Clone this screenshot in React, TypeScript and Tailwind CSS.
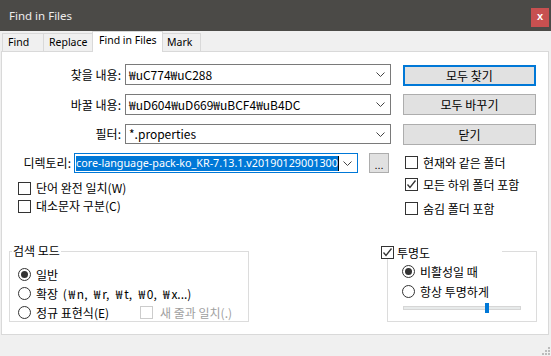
import React from 'react';

const ko = "font-['Noto_Sans_CJK_KR',sans-serif]";
const ui = "font-['Noto_Sans','Noto_Sans_CJK_KR',sans-serif]";

// the won sign is drawn wide in the original font
function Won({ text }: { text: string }) {
  const parts = text.split('₩');
  return (
    <>
      {parts.map((p, i) => (
        <React.Fragment key={i}>
          {i > 0 && <span className="inline-block w-[10px] text-center">₩</span>}
          {p}
        </React.Fragment>
      ))}
    </>
  );
}

function Chevron() {
  return (
    <svg width="9" height="5" viewBox="0 0 9 5" className="shrink-0">
      <path d="M0.5 0.5 L4.5 4.5 L8.5 0.5" fill="none" stroke="#444" strokeWidth="1" />
    </svg>
  );
}

function Check({ checked = false, disabled = false }: { checked?: boolean; disabled?: boolean }) {
  return (
    <span
      className={
        'w-[13px] h-[13px] border bg-white shrink-0 flex items-center justify-center ' +
        (disabled ? 'border-[#cccccc]' : 'border-[#333333]')
      }
    >
      {checked && (
        <svg width="11" height="11" viewBox="0 0 11 11">
          <path d="M1.5 5.5 L4 8.5 L9.5 1.5" fill="none" stroke="#333" strokeWidth="1.3" />
        </svg>
      )}
    </span>
  );
}

function Radio({ on = false }: { on?: boolean }) {
  return (
    <span className="w-[13px] h-[13px] rounded-full border border-[#333333] bg-white shrink-0 flex items-center justify-center">
      {on && <span className="w-[7px] h-[7px] rounded-full bg-[#333333]" />}
    </span>
  );
}

function Combo({ value, h = 'h-[21px]' }: { value: string; h?: string }) {
  return (
    <div className={`ml-[4px] w-[266px] ${h} border border-[#7a7a7a] bg-white flex items-center pl-[3px] pr-[5px] justify-between`}>
      <span className={`${ko} text-[12px] text-black leading-none whitespace-nowrap`}>{value}</span>
      <Chevron />
    </div>
  );
}

function Btn({ label, primary = false }: { label: string; primary?: boolean }) {
  return (
    <div
      className={
        `ml-[12px] w-[133px] h-[21px] bg-[#e1e1e1] flex items-center justify-center ${ko} text-[12px] text-black ` +
        (primary ? 'border-2 border-[#0078d7]' : 'border border-[#adadad]')
      }
    >
      {label}
    </div>
  );
}

function Row({ children, className = '' }: { children: React.ReactNode; className?: string }) {
  return <div className={`flex items-center gap-[5px] ${className}`}>{children}</div>;
}

export default function App() {
  return (
    <div className="w-[551px] h-[356px] bg-[#f0f0f0] flex flex-col overflow-hidden relative">
      {/* Title bar */}
      <div className="h-[31px] shrink-0 bg-[#4b4a47] flex justify-between pl-[9px] pr-[2px]">
        <span className={`${ui} text-[#ededed] text-[11.5px] leading-[31px]`}>Find in Files</span>
        <div className="mt-[8px] w-[18px] h-[19px] bg-[#c75050] flex items-center justify-center text-white text-[11px] font-bold font-['Liberation_Sans',sans-serif] leading-none pb-[2px]">
          x
        </div>
      </div>

      {/* Tabs */}
      <div className={`h-[20px] shrink-0 flex items-end pl-[2px] relative z-10 ${ui} text-[10.5px] text-black`}>
        <div className="w-[42px] h-[18px] bg-[#f0f0f0] border border-b-0 border-[#d9d9d9] pl-[5px] leading-[17px]">Find</div>
        <div className="-ml-px w-[50px] h-[18px] bg-[#f0f0f0] border border-b-0 border-[#d9d9d9] pl-[5px] leading-[17px]">Replace</div>
        <div className="-ml-px w-[71px] h-[21px] -mb-px bg-white border border-b-0 border-[#d9d9d9] pl-[6px] leading-[17px]">Find in Files</div>
        <div className="-ml-px w-[39px] h-[18px] bg-[#f0f0f0] border border-b-0 border-[#d9d9d9] pl-[4px] leading-[17px]">Mark</div>
      </div>

      {/* Panel */}
      <div className="ml-[1px] w-[548px] h-[284px] shrink-0 border border-[#d9d9d9] bg-white pt-[12px]">
        <div className="flex items-start">
          <div className={`w-[119px] text-right ${ko} text-[12px] leading-[21px]`}>찾을 내용:</div>
          <Combo value="₩uC774₩uC288" />
          <div className="mt-[1px]">
            <Btn label="모두 찾기" primary />
          </div>
        </div>
        <div className="flex items-start mt-[8px]">
          <div className={`w-[119px] text-right ${ko} text-[12px] leading-[21px]`}>바꿀 내용:</div>
          <Combo value="₩uD604₩uD669₩uBCF4₩uB4DC" />
          <Btn label="모두 바꾸기" />
        </div>
        <div className="flex items-start mt-[9px]">
          <div className={`w-[119px] text-right ${ko} text-[12px] leading-[20px]`}>필터:</div>
          <Combo value="*.properties" h="h-[20px]" />
          <Btn label="닫기" />
        </div>

        {/* Directory + options */}
        <div className="flex mt-[8px]">
          <div className="w-[403px]">
            <div className="flex items-center h-[20px]">
              <div className={`w-[69px] text-right ${ko} text-[12px]`}>디렉토리:</div>
              <div className="ml-[3px] w-[284px] h-[20px] border border-[#0078d7] bg-white flex items-center pl-[1px] pr-[5px] justify-between overflow-hidden">
                <span className="flex items-center">
                  <span className={`bg-[#0078d7] text-white ${ui} text-[10.75px] leading-[15px] whitespace-nowrap`}>
                    core-language-pack-ko_KR-7.13.1.v20190129001300
                  </span>
                  <span className="w-px h-[15px] bg-black" />
                </span>
                <Chevron />
              </div>
              <div className="ml-[11px] w-[20px] h-[20px] bg-[#e1e1e1] border border-[#adadad] flex items-end justify-center text-[11px] leading-[14px] font-['Liberation_Sans',sans-serif]">
                ...
              </div>
            </div>
            <div className={`mt-[6px] pl-[16px] ${ko} text-[12px]`}>
              <Row className="h-[18px]">
                <Check />
                <span>단어 완전 일치(W)</span>
              </Row>
              <Row className="h-[18px]">
                <Check />
                <span>대소문자 구분(C)</span>
              </Row>
            </div>
          </div>
          <div className={`pt-[3px] ${ko} text-[12px]`}>
            <Row className="h-[13px]">
              <Check />
              <span>현재와 같은 폴더</span>
            </Row>
            <Row className="h-[13px] mt-[9px]">
              <Check checked />
              <span>모든 하위 폴더 포함</span>
            </Row>
            <Row className="h-[13px] mt-[11px]">
              <Check />
              <span>숨김 폴더 포함</span>
            </Row>
          </div>
        </div>

        {/* Groups */}
        <div className={`flex mt-[36px] ${ko} text-[12px]`}>
          <div className="relative ml-[7px] w-[240px] h-[71px] border border-[#dcdcdc] pl-[8px] pt-[16px]">
            <span className="absolute left-[2px] -top-[9px] bg-white px-[1px] leading-[16px]">검색 모드</span>
            <Row className="h-[13px]">
              <Radio on />
              <span>일반</span>
            </Row>
            <Row className="h-[13px] mt-[6px]">
              <Radio />
              <span className="whitespace-nowrap [word-spacing:2px]">
                <Won text="확장 (₩n, ₩r, ₩t, ₩0, ₩x...)" />
              </span>
            </Row>
            <div className="flex items-center h-[13px] mt-[6px]">
              <Row className="w-[122px]">
                <Radio />
                <span>정규 표현식(E)</span>
              </Row>
              <Row className="gap-[7px]">
                <Check disabled />
                <span className="text-[#a0a0a0]">새 줄과 일치(.)</span>
              </Row>
            </div>
          </div>

          <div className="relative ml-[138px] w-[150px] h-[71px] border border-[#dcdcdc] pl-[14px] pt-[13px]">
            <div className="absolute -left-[7px] -top-[6px] w-[121px] h-[13px] bg-white flex items-center gap-[3px]">
              <Check checked />
              <span>투명도</span>
            </div>
            <Row className="h-[13px]">
              <Radio on />
              <span>비활성일 때</span>
            </Row>
            <Row className="h-[13px] mt-[7px]">
              <Radio />
              <span>항상 투명하게</span>
            </Row>
            <div className="relative ml-[1px] mt-[5px] w-[118px] h-[10px]">
              <div className="absolute left-0 right-0 top-[3px] h-[4px] bg-[#e7eaea] border border-[#d6d6d6]" />
              <div className="absolute left-[82px] top-0 w-[4px] h-[10px] bg-[#0078d7]" />
            </div>
          </div>
        </div>
      </div>

      {/* Resize grip */}
      <svg className="absolute right-[1px] bottom-[1px]" width="9" height="9" viewBox="0 0 9 9">
        <rect x="7" y="1" width="2" height="2" fill="#bcbcbc" />
        <rect x="4" y="4" width="2" height="2" fill="#bcbcbc" />
        <rect x="7" y="4" width="2" height="2" fill="#bcbcbc" />
        <rect x="1" y="7" width="2" height="2" fill="#bcbcbc" />
        <rect x="4" y="7" width="2" height="2" fill="#bcbcbc" />
        <rect x="7" y="7" width="2" height="2" fill="#bcbcbc" />
      </svg>
    </div>
  );
}
